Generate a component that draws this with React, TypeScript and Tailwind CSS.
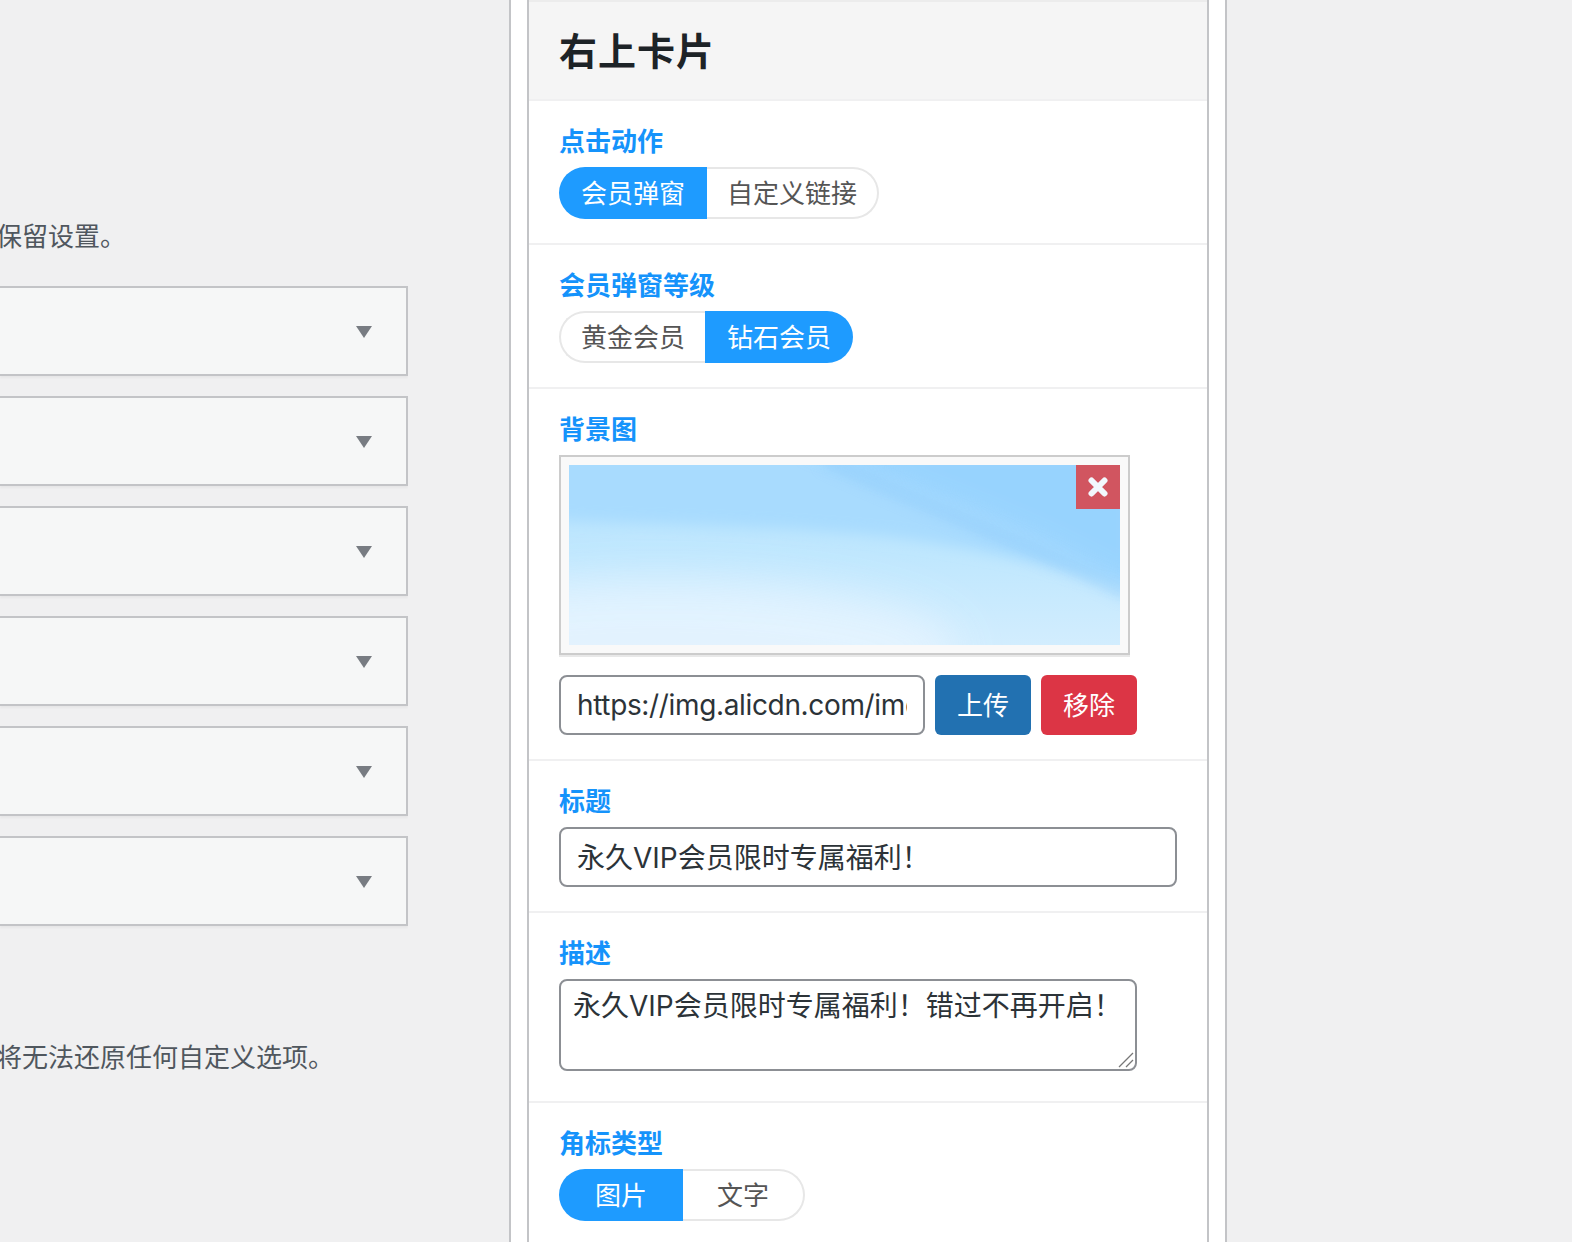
const FONT = "font-['Inter','Noto_Sans_CJK_SC',sans-serif]";

// ─── Segmented toggle ────────────────────────────────────────────────────────
function Toggle({ items }: { items: { label: string; active?: boolean; width: string }[] }) {
  return (
    <div className="flex h-[52px] w-fit">
      {items.map((item, i) => {
        const first = i === 0;
        const last = i === items.length - 1;
        return (
          <div
            key={item.label}
            className={[
              "flex items-center justify-center text-[26px]",
              item.width,
              first ? "rounded-l-full" : "",
              last ? "rounded-r-full" : "",
              item.active
                ? "bg-[#1e9bff] text-white"
                : "border-2 border-[#e7e7e7] bg-white text-[#555555]",
              !item.active && first ? "border-r-0" : "",
              !item.active && last ? "border-l-0" : "",
            ].join(" ")}
          >
            {item.label}
          </div>
        );
      })}
    </div>
  );
}

function Label({ children }: { children: string }) {
  return <div className="mb-[11px] h-[28px] text-[26px] leading-[28px] font-semibold text-[#1593fb]">{children}</div>;
}

function Section({ children, className }: { children: React.ReactNode; className: string }) {
  return <div className={`border-b-2 border-[#f0f0f1] pt-[27px] pl-[30px] ${className}`}>{children}</div>;
}

// Select-like row in the left settings column
function Row() {
  return (
    <div className="flex h-[90px] items-center justify-end border-y-2 border-r-2 border-[#c3c4c7] bg-[#f6f7f7] pt-[2px] pr-[34px] shadow-[0_2px_2px_rgba(0,0,0,0.04)]">
      <svg width="16" height="12" viewBox="0 0 16 12">
        <polygon points="0,0 16,0 8,12" fill="#787c82" />
      </svg>
    </div>
  );
}

// Stand-in for the uploaded background picture
function Picture() {
  return (
    <svg className="block h-[180px] w-[551px]" viewBox="0 0 551 180" preserveAspectRatio="none">
      <defs>
        <linearGradient id="sky" x1="0" y1="0" x2="0" y2="1">
          <stop offset="0" stopColor="#b8e3fe" />
          <stop offset="0.5" stopColor="#bfe7fe" />
          <stop offset="1" stopColor="#d2edfe" />
        </linearGradient>
        <filter id="wide" x="-30%" y="-50%" width="160%" height="200%">
          <feGaussianBlur stdDeviation="22" />
        </filter>
        <filter id="soft" x="-20%" y="-30%" width="140%" height="160%">
          <feGaussianBlur stdDeviation="10" />
        </filter>
        <filter id="edge" x="-20%" y="-30%" width="140%" height="160%">
          <feGaussianBlur stdDeviation="7" />
        </filter>
      </defs>
      <rect width="551" height="180" fill="url(#sky)" />
      <ellipse cx="90" cy="185" rx="300" ry="70" fill="#e6f4ff" opacity="0.85" filter="url(#wide)" />
      <path d="M-20 -20H571V125C490 100 420 86 340 74C220 60 100 60 -20 55Z" fill="#a8dbfe" filter="url(#edge)" />
      <path d="M230 -20H571V125C470 66 350 22 230 -20Z" fill="#94d2fe" opacity="0.8" filter="url(#soft)" />
      <path d="M255 -5C340 35 450 75 560 130" fill="none" stroke="#86c6fa" strokeWidth="10" opacity="0.5" filter="url(#edge)" />
    </svg>
  );
}

export default function App() {
  return (
    <div className={`flex h-[1242px] w-[1572px] overflow-hidden bg-[#f0f0f1] ${FONT}`}>
      {/* Left settings column, cut off by the page edge */}
      <div className="w-[408px] shrink-0 overflow-hidden pt-[219px] text-[26px] text-[#50575e]">
        <p className="mb-[31px] -ml-[4px] h-[36px] leading-[36px] whitespace-nowrap">保留设置。</p>
        <div className="flex flex-col gap-[20px]">
          <Row />
          <Row />
          <Row />
          <Row />
          <Row />
          <Row />
        </div>
        <p className="mt-[114px] -ml-[4px] h-[36px] leading-[36px] whitespace-nowrap">将无法还原任何自定义选项。</p>
      </div>

      {/* Settings panel */}
      <div className="ml-[101px] h-full w-[718px] shrink-0 border-x-2 border-[#c3c4c7] bg-white px-[16px]">
        <div className="h-full w-[682px] border-x-2 border-[#c3c4c7]">
          <div className="flex h-[101px] items-center border-y-2 border-t-[#ececec] border-b-[#f0f0f1] bg-[#f5f5f5] pt-[2px] pl-[30px] text-[38px] font-semibold tracking-[1px] text-[#1d2327]">
            右上卡片
          </div>

          <Section className="h-[144px]">
            <Label>点击动作</Label>
            <Toggle items={[{ label: "会员弹窗", active: true, width: "w-[148px]" }, { label: "自定义链接", width: "w-[172px]" }]} />
          </Section>

          <Section className="h-[144px]">
            <Label>会员弹窗等级</Label>
            <Toggle items={[{ label: "黄金会员", width: "w-[146px]" }, { label: "钻石会员", active: true, width: "w-[148px]" }]} />
          </Section>

          <Section className="h-[372px]">
            <Label>背景图</Label>
            <div className="relative h-[200px] w-[571px] border-2 border-[#cccccc] bg-[#f9f9f9] p-[8px] shadow-[0_2px_0_#e8e8e8]">
              <Picture />
              <div className="absolute top-[8px] right-[8px] flex h-[44px] w-[44px] items-center justify-center bg-[#d15560]">
                <svg width="20" height="20" viewBox="0 0 20 20">
                  <path d="M3.5 3.5L16.5 16.5M16.5 3.5L3.5 16.5" stroke="#f2f8fd" strokeWidth="6" strokeLinecap="round" />
                </svg>
              </div>
            </div>
            <div className="mt-[20px] flex h-[60px]">
              <input
                readOnly
                value="https://img.alicdn.com/imgextra/i1/bg.png"
                className="h-full w-[366px] rounded-[8px] border-2 border-[#8c8f94] bg-white px-[16px] text-[28px] tracking-[-0.35px] text-[#2c3338] outline-none"
              />
              <button type="button" className="ml-[10px] h-full w-[96px] rounded-[6px] bg-[#2271b1] text-[26px] text-white">
                上传
              </button>
              <button type="button" className="ml-[10px] h-full w-[96px] rounded-[6px] bg-[#dc3545] text-[26px] text-white">
                移除
              </button>
            </div>
          </Section>

          <Section className="h-[152px]">
            <Label>标题</Label>
            <input
              readOnly
              value="永久VIP会员限时专属福利！"
              className="h-[60px] w-[618px] rounded-[8px] border-2 border-[#8c8f94] bg-white px-[16px] pb-[2px] text-[28px] text-[#2c3338] outline-none"
            />
          </Section>

          <Section className="h-[190px]">
            <Label>描述</Label>
            <div className="relative h-[92px] w-[578px]">
              <textarea
                readOnly
                value="永久VIP会员限时专属福利！错过不再开启！"
                className="block h-full w-full resize-none rounded-[8px] border-2 border-[#8c8f94] bg-white px-[12px] py-[7px] text-[28px] leading-[36px] text-[#2c3338] outline-none"
              />
              {/* resize handle */}
              <svg className="absolute right-[3px] bottom-[3px]" width="16" height="16" viewBox="0 0 16 16">
                <path d="M1 15L15 1M8 15L15 8" stroke="#777777" strokeWidth="1.3" fill="none" />
              </svg>
            </div>
          </Section>

          <div className="pt-[27px] pl-[30px]">
            <Label>角标类型</Label>
            <Toggle items={[{ label: "图片", active: true, width: "w-[124px]" }, { label: "文字", width: "w-[122px]" }]} />
          </div>
        </div>
      </div>
    </div>
  );
}
